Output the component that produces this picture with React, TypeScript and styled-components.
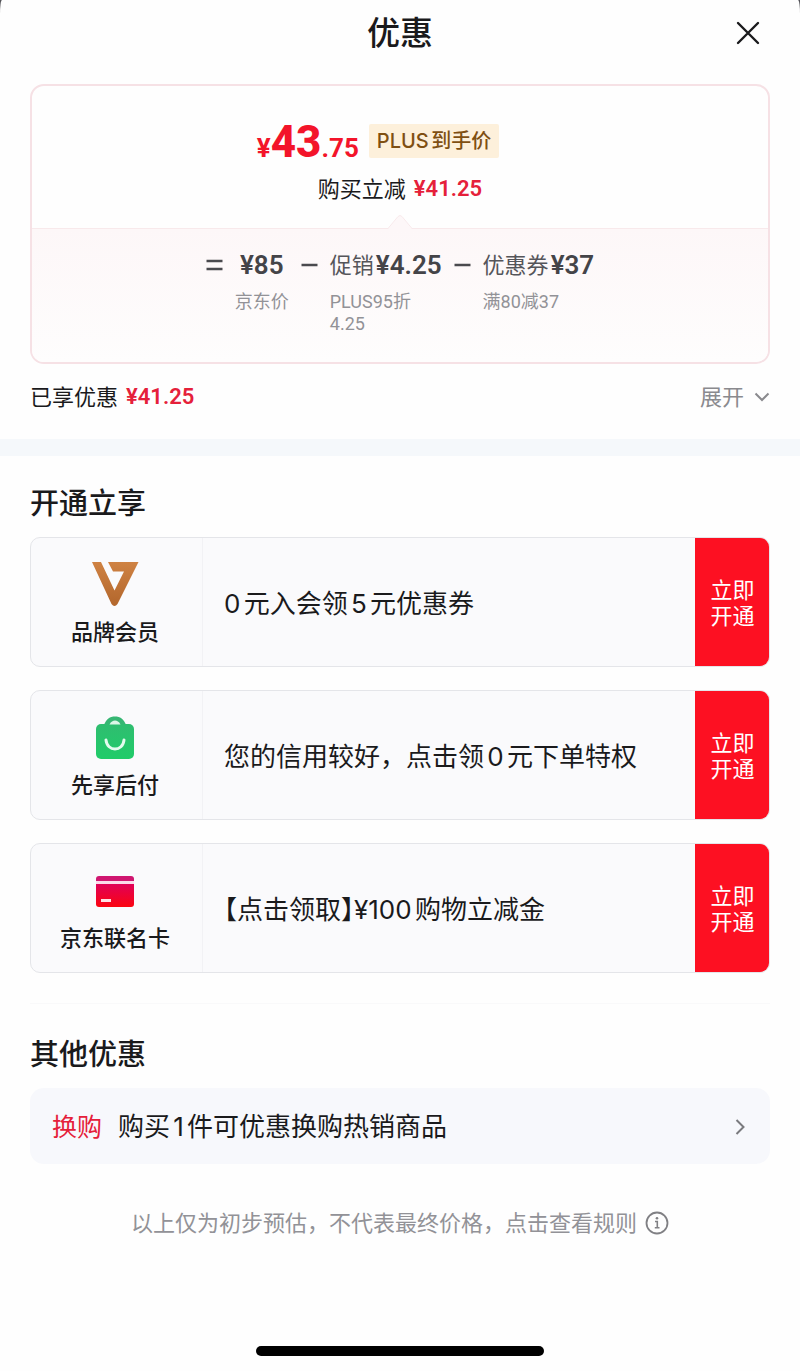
import React from "react";
import styled, { createGlobalStyle } from "styled-components";

const sans = `Inter, "Noto Sans CJK SC", sans-serif`;
const digits = `Roboto, "Noto Sans CJK SC", sans-serif`;

const GlobalStyle = createGlobalStyle`
  * { box-sizing: border-box; }
  body {
    margin: 0;
    background: #55555a;
    font-family: ${sans};
    color: #1a1a1c;
    text-autospace: normal;
  }
  h1, h2, p { margin: 0; }
  button { border: 0; margin: 0; padding: 0; background: none; font: inherit; color: inherit; cursor: pointer; }
  a { color: inherit; text-decoration: none; }
  svg { display: block; }
`;

const Sheet = styled.main`
  display: flex;
  flex-direction: column;
  min-height: 100vh;
  background: #fefefe;
  border-radius: 2px 2px 0 0 / 14px 14px 0 0;
`;

const Header = styled.header`
  display: grid;
  grid-template-columns: 1fr auto 1fr;
  align-items: center;
  height: 66px;
  padding: 0 40px;
`;

const Title = styled.h1`
  grid-column: 2;
  font-size: 33px;
  line-height: 40px;
  font-weight: 500;
`;

const CloseButton = styled.button`
  justify-self: end;
`;

const PriceCard = styled.section`
  margin: 18px 30px 0;
  border: 2px solid #f6e1e5;
  border-radius: 14px;
  overflow: hidden;
`;

const PriceTop = styled.div`
  display: flex;
  flex-direction: column;
  align-items: center;
  height: 142px;
  padding-top: 32px;
`;

const PriceLine = styled.div`
  display: flex;
  align-items: flex-start;
  gap: 10px;
  height: 55px;
  padding-right: 44px;
`;

const Price = styled.strong`
  font-family: ${digits};
  font-size: 26px;
  line-height: 48px;
  font-weight: 700;
  color: #f3142a;
`;

const PriceWhole = styled.span`
  font-size: 44px;
  font-weight: 800;
`;

const PlusTag = styled.span`
  margin-top: 6px;
  padding: 0 8px;
  border-radius: 2px;
  background: #fdf0db;
  color: #7f4f12;
  font-size: 20px;
  line-height: 34px;
  font-weight: 500;
`;

const SavedText = styled.p`
  display: flex;
  align-items: center;
  gap: 8px;
  font-size: 22px;
  line-height: 32px;
`;

const SavedAmount = styled.span`
  font-family: ${digits};
  font-weight: 600;
  color: #e5203a;
`;

const Formula = styled.div`
  position: relative;
  display: flex;
  justify-content: center;
  gap: 12px;
  height: 134px;
  padding-top: 19px;
  border-top: 1px solid #f8e9eb;
  background: linear-gradient(#fdf7f8, #fefdfd);
`;

const Notch = styled.svg`
  position: absolute;
  top: -15px;
  left: calc(50% - 14px);
`;

const Operator = styled.span`
  flex: none;
  height: 34px;
  display: flex;
  align-items: center;
`;

const Term = styled.div<{ $center?: boolean }>`
  text-align: ${(p) => (p.$center ? "center" : "left")};
`;

const TermValue = styled.p`
  display: flex;
  justify-content: inherit;
  gap: 2px;
  font-size: 22px;
  line-height: 34px;
  color: #55555a;
`;

const TermAmount = styled.span`
  flex: 1;
  font-family: ${digits};
  font-size: 26px;
  font-weight: 600;
  color: #444448;
`;

const TermNote = styled.p`
  padding-top: 9px;
  font-family: ${digits};
  font-size: 18px;
  line-height: 22px;
  color: #929297;
  text-autospace: no-autospace;
`;

const Summary = styled.div`
  display: flex;
  align-items: center;
  justify-content: space-between;
  height: 75px;
  padding: 0 30px 10px;
`;

const ExpandButton = styled.button`
  display: flex;
  align-items: center;
  gap: 10px;
  font-size: 22px;
  line-height: 32px;
  color: #8a8a8e;
`;

const Band = styled.div`
  height: 17px;
  background: #f5f8fb;
`;

const Section = styled.section`
  padding: 0 30px;

  & + & {
    padding-top: 3px;
  }
`;

const SectionTitle = styled.h2`
  padding: 27px 0 13px;
  font-size: 29px;
  line-height: 41px;
  font-weight: 500;
`;

const OfferList = styled.div`
  display: flex;
  flex-direction: column;
  gap: 23px;
  padding-bottom: 30px;
  border-bottom: 1px solid #f9f9fa;
`;

const OfferCard = styled.article`
  display: flex;
  height: 130px;
  border: 1px solid #e4e5e9;
  border-radius: 10px;
  overflow: hidden;
  background: #fafafc;
`;

const OfferBrand = styled.div`
  flex: none;
  display: flex;
  flex-direction: column;
  align-items: center;
  width: 172px;
  padding: 19px 3px 0 0;
  border-right: 1px solid #f2f2f5;
`;

const OfferIcon = styled.div`
  display: grid;
  place-items: center;
  height: 56px;
`;

const OfferName = styled.p`
  padding-top: 3px;
  font-size: 22px;
  line-height: 32px;
  font-weight: 500;
`;

const OfferText = styled.p<{ $tightBrackets?: boolean }>`
  flex: 1;
  align-self: center;
  padding: 4px 0 0 21px;
  font-size: 26px;
  line-height: 38px;
  font-feature-settings: ${(p) => (p.$tightBrackets ? `"halt"` : "normal")};
`;

const OpenButton = styled.button`
  flex: none;
  width: 75px;
  margin: -1px;
  padding-top: 2px;
  background: #fd1022;
  color: #fff;
  font-size: 22px;
  line-height: 26px;
`;

const OtherRow = styled.a`
  display: flex;
  align-items: center;
  gap: 16px;
  height: 76px;
  padding: 2px 25px 0 22px;
  border-radius: 14px;
  background: #f7f8fc;
  font-size: 26px;
  line-height: 38px;
`;

const OtherTag = styled.span`
  font-size: 25px;
  color: #e5203a;
`;

const OtherText = styled.span`
  flex: 1;
`;

const RulesLink = styled.a`
  display: flex;
  align-items: center;
  justify-content: center;
  gap: 8px;
  padding: 43px 0;
  font-size: 22px;
  line-height: 32px;
  color: #929297;
`;

const HomeIndicator = styled.div`
  width: 36%;
  height: 10px;
  margin: auto auto 15px;
  border-radius: 5px;
  background: #000;
`;

const MemberIcon = () => (
  <svg width="48" height="48" viewBox="0 0 48 48" aria-hidden="true">
    <defs>
      <linearGradient id="bronze" x1="0" y1="0" x2="0" y2="1">
        <stop offset="0" stopColor="#cf8243" />
        <stop offset="1" stopColor="#b2662c" />
      </linearGradient>
    </defs>
    <path
      fill="url(#bronze)"
      d="M1 1H10L23.500 29.500L33 10.500H22L17 1H47.500L26.500 43Q23.500 47 20.500 43Z"
    />
  </svg>
);

const BagIcon = () => (
  <svg width="38" height="44" viewBox="0 0 38 44" aria-hidden="true">
    <defs>
      <linearGradient id="bag" x1="0" y1="0" x2="0" y2="1">
        <stop offset="0" stopColor="#2fbd70" />
        <stop offset="1" stopColor="#20cc69" />
      </linearGradient>
    </defs>
    <path d="M8 9C10 3 14 0.500 19 0.500S28 3 30 9Z" fill="#36b673" />
    <rect y="8" width="38" height="35" rx="5" fill="url(#bag)" />
    <path d="M13.500 8.500C15 5.500 17 4.500 19 4.500S23 5.500 24.500 8.500Z" fill="#dcf6e7" />
    <path d="M10 24C11 36 27 36 28 24" fill="none" stroke="#e4fbee" strokeWidth="3" strokeLinecap="round" />
  </svg>
);

const CardIcon = () => (
  <svg width="40" height="32" viewBox="0 0 40 32" aria-hidden="true">
    <defs>
      <linearGradient id="card" x1="0" y1="0" x2="0" y2="1">
        <stop offset="0" stopColor="#e00058" />
        <stop offset="1" stopColor="#fb0510" />
      </linearGradient>
    </defs>
    <path d="M1 6V4Q1 1 4 1H36Q39 1 39 4V6Z" fill="#cf1670" />
    <path d="M1 9H39V29Q39 32 36 32H4Q1 32 1 29Z" fill="url(#card)" />
    <rect x="1" y="6" width="38" height="3" fill="#fbd9ea" />
    <rect x="6" y="24" width="10" height="3" fill="#ffe1e4" />
  </svg>
);

const Minus = () => (
  <Operator>
    <svg width="17" height="20" viewBox="0 0 17 20" role="img" aria-label="减">
      <path d="M0.500 10H16.500" stroke="#4a4a4e" strokeWidth="2.500" />
    </svg>
  </Operator>
);

const offers = [
  { name: "品牌会员", text: "0元入会领5元优惠券", icon: <MemberIcon /> },
  { name: "先享后付", text: "您的信用较好，点击领0元下单特权", icon: <BagIcon /> },
  { name: "京东联名卡", text: "【点击领取】¥100购物立减金", icon: <CardIcon />, tightBrackets: true },
];

export default function App() {
  return (
    <>
      <GlobalStyle />
      <Sheet>
        <Header>
          <Title>优惠</Title>
          <CloseButton aria-label="关闭">
            <svg width="24" height="24" viewBox="0 0 24 24" fill="none" stroke="#1a1a1c" strokeWidth="2.400" strokeLinecap="round">
              <path d="M2 2L22 22M22 2L2 22" />
            </svg>
          </CloseButton>
        </Header>

        <PriceCard>
          <PriceTop>
            <PriceLine>
              <Price>
                ¥<PriceWhole>43</PriceWhole>.75
              </Price>
              <PlusTag>PLUS到手价</PlusTag>
            </PriceLine>
            <SavedText>
              购买立减<SavedAmount>¥41.25</SavedAmount>
            </SavedText>
          </PriceTop>
          <Formula>
            <Notch width="28" height="16" viewBox="0 0 28 16">
              <path d="M0 16L3 14L12 2.500Q14 0.500 16 2.500L25 14L28 16Z" fill="#fdf7f8" />
              <path d="M0 14.500H2L12 2.500Q14 0.500 16 2.500L26 14.500H28" fill="none" stroke="#f8e9eb" />
            </Notch>
            <Operator>
              <svg width="17" height="20" viewBox="0 0 17 20" role="img" aria-label="等于">
                <path d="M0.500 6H16.500M0.500 14H16.500" stroke="#4a4a4e" strokeWidth="2.500" />
              </svg>
            </Operator>
            <Term $center>
              <TermValue>
                <TermAmount>¥85</TermAmount>
              </TermValue>
              <TermNote>京东价</TermNote>
            </Term>
            <Minus />
            <Term>
              <TermValue>
                促销<TermAmount>¥4.25</TermAmount>
              </TermValue>
              <TermNote>
                PLUS95折
                <br />
                4.25
              </TermNote>
            </Term>
            <Minus />
            <Term>
              <TermValue>
                优惠券<TermAmount>¥37</TermAmount>
              </TermValue>
              <TermNote>满80减37</TermNote>
            </Term>
          </Formula>
        </PriceCard>

        <Summary>
          <SavedText>
            已享优惠<SavedAmount>¥41.25</SavedAmount>
          </SavedText>
          <ExpandButton>
            展开
            <svg width="16" height="10" viewBox="0 0 16 10" fill="none" stroke="#8a8a8e" strokeWidth="2">
              <path d="M1.500 1.500L8 8L14.500 1.500" />
            </svg>
          </ExpandButton>
        </Summary>
        <Band />

        <Section>
          <SectionTitle>开通立享</SectionTitle>
          <OfferList>
            {offers.map((o) => (
              <OfferCard key={o.name}>
                <OfferBrand>
                  <OfferIcon>{o.icon}</OfferIcon>
                  <OfferName>{o.name}</OfferName>
                </OfferBrand>
                <OfferText $tightBrackets={o.tightBrackets}>{o.text}</OfferText>
                <OpenButton>
                  立即
                  <br />
                  开通
                </OpenButton>
              </OfferCard>
            ))}
          </OfferList>
        </Section>

        <Section>
          <SectionTitle>其他优惠</SectionTitle>
          <OtherRow href="#exchange">
            <OtherTag>换购</OtherTag>
            <OtherText>购买1件可优惠换购热销商品</OtherText>
            <svg width="10" height="16" viewBox="0 0 10 16" fill="none" stroke="#7a7a7e" strokeWidth="2">
              <path d="M1.500 1L8.500 8L1.500 15" />
            </svg>
          </OtherRow>
          <RulesLink href="#rules">
            以上仅为初步预估，不代表最终价格，点击查看规则
            <svg width="24" height="24" viewBox="0 0 24 24" fill="none" stroke="#808084" strokeWidth="1.800">
              <circle cx="12" cy="12" r="10.500" />
              <path d="M10 10.500H12.300V16.500M9.800 16.800H14.500" strokeWidth="1.600" />
              <circle cx="12" cy="7.200" r="1.300" fill="#808084" stroke="none" />
            </svg>
          </RulesLink>
        </Section>
        <HomeIndicator />
      </Sheet>
    </>
  );
}
